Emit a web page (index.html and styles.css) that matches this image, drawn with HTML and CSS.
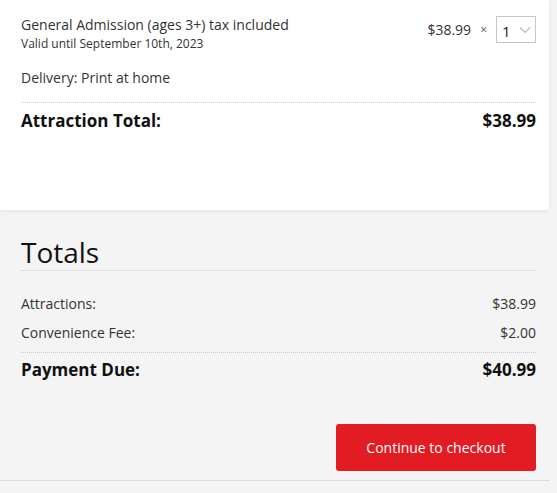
FILE: index.html
```html
<!DOCTYPE html>
<html>
<head>
<meta charset="utf-8">
<link rel="stylesheet" href="styles.css">
</head>
<body>
<div class="page">
  <section class="card">
    <div class="item">
      <div class="item-info">
        <div class="item-name">General Admission (ages 3+) tax included</div>
        <div class="item-valid">Valid until September 10th, 2023</div>
        <div class="item-delivery">Delivery: Print at home</div>
      </div>
      <div class="item-price">
        <span class="price">$38.99</span>
        <span class="times">×</span>
        <span class="qty">1
          <svg class="chev" width="12" height="8" viewBox="0 0 12 8"><path d="M1 1.5 L6 6.5 L11 1.5" fill="none" stroke="#b8b8b8" stroke-width="1.1"/></svg>
        </span>
      </div>
    </div>
    <div class="total-row">
      <span>Attraction Total:</span>
      <span>$38.99</span>
    </div>
  </section>
  <section class="totals">
    <h2 class="totals-title">Totals</h2>
    <div class="line first">
      <span>Attractions:</span>
      <span>$38.99</span>
    </div>
    <div class="line">
      <span>Convenience Fee:</span>
      <span>$2.00</span>
    </div>
    <div class="due">
      <span>Payment Due:</span>
      <span>$40.99</span>
    </div>
    <div class="actions">
      <button class="checkout">Continue to checkout</button>
    </div>
  </section>
  <div class="bottom-rule"></div>
</div>
</body>
</html>
```
FILE: styles.css
```css
* { box-sizing: border-box; }
html, body {
  margin: 0;
  padding: 0;
  background: #f4f4f4;
  font-family: "Open Sans", "Liberation Sans", sans-serif;
  color: #222;
}
.page {
  width: 557px;
  height: 493px;
  overflow: hidden;
}
.card {
  width: 549px;
  height: 210px;
  background: #fff;
  box-shadow: 0 1px 4px rgba(0,0,0,0.08);
  padding: 14px 13px 0 21px;
}
.item {
  display: flex;
  justify-content: space-between;
  align-items: flex-start;
  padding-bottom: 14px;
  border-bottom: 1px dotted #cfcfcf;
}
.item-name {
  font-size: 14px;
  line-height: 22px;
  color: #333;
}
.item-valid {
  font-size: 12px;
  line-height: 16px;
  color: #333;
}
.item-delivery {
  font-size: 14px;
  line-height: 20px;
  margin-top: 16px;
  color: #333;
}
.item-price {
  display: flex;
  align-items: center;
  font-size: 14px;
  color: #333;
  padding-top: 2px;
}
.times {
  font-size: 12px;
  margin: 0 9px 0 9px;
  color: #555;
}
.qty {
  display: flex;
  align-items: center;
  justify-content: space-between;
  width: 40px;
  height: 27px;
  border: 1px solid #c6c6c6;
  padding: 2px 4px 0 5px;
  font-size: 15px;
  color: #222;
}
.chev { margin-top: -2px; }
.total-row {
  display: flex;
  justify-content: space-between;
  font-weight: 700;
  font-size: 17px;
  line-height: 22px;
  padding-top: 7px;
  color: #111;
}
.totals {
  width: 515px;
  margin-left: 21px;
  padding-top: 24px;
}
.totals-title {
  margin: 0;
  font-weight: 400;
  font-size: 28px;
  line-height: 36px;
  color: #111;
  border-bottom: 1px dotted #c8c8c8;
}
.line {
  display: flex;
  justify-content: space-between;
  font-size: 14px;
  line-height: 20px;
  color: #333;
  margin-top: 9px;
}
.line.first { margin-top: 23px; }
.due {
  display: flex;
  justify-content: space-between;
  font-weight: 700;
  font-size: 17px;
  line-height: 22px;
  color: #111;
  border-top: 1px dotted #c8c8c8;
  margin-top: 9px;
  padding-top: 6px;
}
.actions {
  display: flex;
  justify-content: flex-end;
  margin-top: 43px;
}
.checkout {
  width: 200px;
  height: 47px;
  background: #e31b23;
  color: #fff;
  border: none;
  border-radius: 3px;
  font-family: "Open Sans", "Liberation Sans", sans-serif;
  font-size: 14px;
  padding: 0;
}
.bottom-rule {
  width: 550px;
  height: 1px;
  background: #dcdcdc;
  margin-top: 9px;
}
```
